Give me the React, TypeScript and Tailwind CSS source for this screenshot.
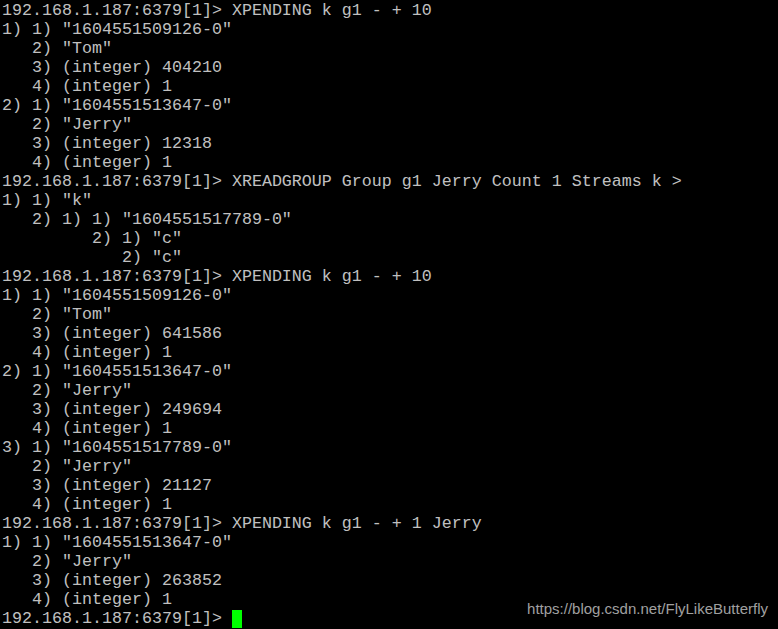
const prompt = "192.168.1.187:6379[1]> "

const lines = [
  prompt + "XPENDING k g1 - + 10",
  '1) 1) "1604551509126-0"',
  '   2) "Tom"',
  "   3) (integer) 404210",
  "   4) (integer) 1",
  '2) 1) "1604551513647-0"',
  '   2) "Jerry"',
  "   3) (integer) 12318",
  "   4) (integer) 1",
  prompt + "XREADGROUP Group g1 Jerry Count 1 Streams k >",
  '1) 1) "k"',
  '   2) 1) 1) "1604551517789-0"',
  '         2) 1) "c"',
  '            2) "c"',
  prompt + "XPENDING k g1 - + 10",
  '1) 1) "1604551509126-0"',
  '   2) "Tom"',
  "   3) (integer) 641586",
  "   4) (integer) 1",
  '2) 1) "1604551513647-0"',
  '   2) "Jerry"',
  "   3) (integer) 249694",
  "   4) (integer) 1",
  '3) 1) "1604551517789-0"',
  '   2) "Jerry"',
  "   3) (integer) 21127",
  "   4) (integer) 1",
  prompt + "XPENDING k g1 - + 1 Jerry",
  '1) 1) "1604551513647-0"',
  '   2) "Jerry"',
  "   3) (integer) 263852",
  "   4) (integer) 1",
]

function App() {
  return (
    <div className="relative w-[778px] h-[629px] bg-black overflow-hidden">
      <div className="pl-[2px] pt-[1px] font-['Liberation_Mono','Courier_New',monospace] text-[16.67px] leading-[19px] text-[#c0c0c0] whitespace-pre">
        {lines.map((l, i) => (
          <div key={i}>{l}</div>
        ))}
        <div className="flex items-center">
          <span>{prompt}</span>
          <span className="inline-block w-[10px] h-[18px] bg-[#00ff00]"></span>
        </div>
      </div>
      {/* watermark */}
      <div className="absolute right-[10px] bottom-[9px] font-['Liberation_Sans',Arial,sans-serif] text-[15px] text-[#a0a0a0]">
        https://blog.csdn.net/FlyLikeButterfly
      </div>
    </div>
  )
}

export default App
